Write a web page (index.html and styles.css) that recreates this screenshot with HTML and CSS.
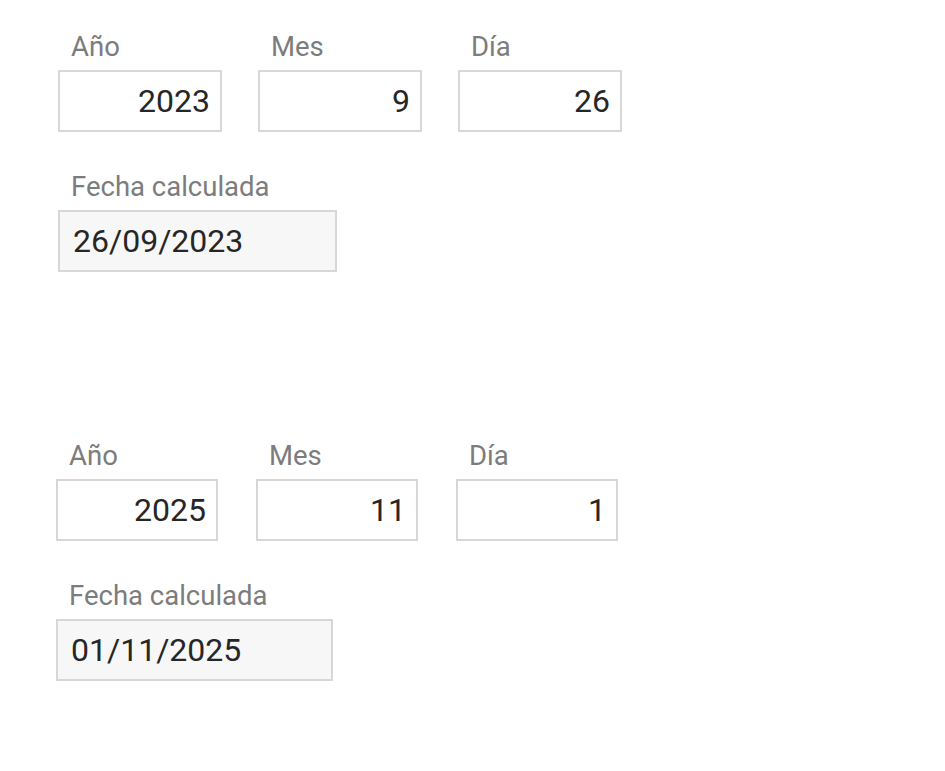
FILE: index.html
```html
<!DOCTYPE html>
<html lang="es">
<head>
<meta charset="utf-8">
<title>Fecha calculada</title>
<link rel="stylesheet" href="styles.css">
</head>
<body>
  <section class="form form-a">
    <div class="row">
      <div class="field">
        <div class="label">Año</div>
        <div class="box num">2023</div>
      </div>
      <div class="field">
        <div class="label">Mes</div>
        <div class="box num">9</div>
      </div>
      <div class="field">
        <div class="label">Día</div>
        <div class="box num">26</div>
      </div>
    </div>
    <div class="row row-result">
      <div class="field">
        <div class="label">Fecha calculada</div>
        <div class="box result">26/09/2023</div>
      </div>
    </div>
  </section>

  <section class="form form-b">
    <div class="row">
      <div class="field">
        <div class="label">Año</div>
        <div class="box num">2025</div>
      </div>
      <div class="field">
        <div class="label">Mes</div>
        <div class="box num">11</div>
      </div>
      <div class="field">
        <div class="label">Día</div>
        <div class="box num">1</div>
      </div>
    </div>
    <div class="row row-result">
      <div class="field">
        <div class="label">Fecha calculada</div>
        <div class="box result">01/11/2025</div>
      </div>
    </div>
  </section>
</body>
</html>
```

FILE: styles.css
```css
html, body {
  margin: 0;
  padding: 0;
  background: #ffffff;
}

body {
  font-family: Roboto, "Liberation Sans", Arial, sans-serif;
  color: #222222;
}

.form {
  display: flex;
  flex-direction: column;
  gap: 39px;
}

.form-a {
  padding: 31px 0 0 58px;
}

.form-b {
  padding: 0 0 0 56px;
  margin-top: 168px;
}

.row {
  display: flex;
  gap: 36px;
}

.form-b .row {
  gap: 38px;
}

.field {
  display: flex;
  flex-direction: column;
}

.label {
  font-size: 27.5px;
  line-height: 32px;
  height: 32px;
  color: #7c7c7c;
  padding-left: 13px;
  margin-bottom: 7px;
  white-space: nowrap;
}

.box {
  box-sizing: border-box;
  height: 62px;
  border: 2px solid #d7d7d7;
  font-size: 32px;
  line-height: 58px;
  color: #262626;
  white-space: nowrap;
}

.num {
  width: 164px;
  text-align: right;
  padding-right: 10px;
}

.form-b .num {
  width: 162px;
}

.result {
  width: 279px;
  background: #f7f7f7;
  padding-left: 13px;
}

.form-b .result {
  width: 277px;
}
```
